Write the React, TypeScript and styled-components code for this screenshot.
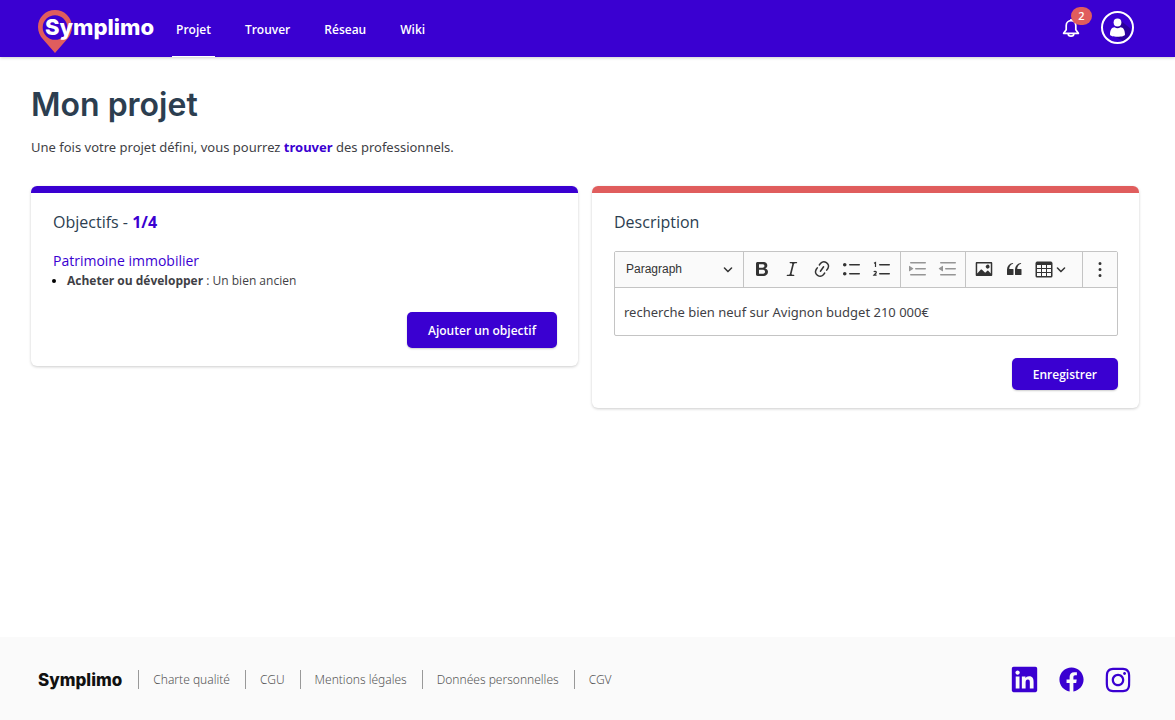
import React from "react";
import styled, { createGlobalStyle } from "styled-components";
import { BiLogoFacebookCircle } from "react-icons/bi";
import { FaInstagram, FaLinkedin } from "react-icons/fa";

const violet = "#3a00d1";
const coral = "#e05d5d";
const slate = "#2c3e50";
const brandFont = `"Inter", "Open Sans", sans-serif`;
const wideFont = `"Noto Sans", "Open Sans", sans-serif`;

const GlobalStyle = createGlobalStyle`
  *, *::before, *::after { box-sizing: border-box; }
  body {
    margin: 0;
    background: #fff;
    color: #3f3f46;
    font-family: "Open Sans", "Noto Sans", sans-serif;
    font-size: 13px;
    line-height: 20px;
  }
  h1, h2, h3, p, ul { margin: 0; padding: 0; }
  a { text-decoration: none; }
  button, select, textarea { font: inherit; color: inherit; }
`;

const Page = styled.div`
  min-height: 100vh;
  display: flex;
  flex-direction: column;
`;

const Header = styled.header`
  display: flex;
  align-items: stretch;
  height: 57px;
  padding: 0 41px 0 38px;
  background: ${violet};
  box-shadow: 0 1px 3px rgba(0, 0, 0, 0.2);
`;

const Logo = styled.a`
  display: grid;
  align-items: start;
  width: 114px;
  margin-right: 20px;
  padding-top: 10px;
  color: #fff;

  > * { grid-area: 1 / 1; }
`;

const LogoText = styled.span`
  padding: 3px 0 0 7px;
  font: 800 22px/28px ${brandFont};
`;

const Nav = styled.nav`
  display: flex;
  gap: 26px;
`;

const NavLink = styled.a<{ $active?: boolean }>`
  padding: 20px 4px 0;
  border-bottom: 1px solid ${(p) => (p.$active ? "#fff" : "transparent")};
  color: #fff;
  font-size: 12px;
  font-weight: 600;
`;

const HeaderActions = styled.div`
  display: flex;
  align-items: center;
  gap: 21px;
  margin-left: auto;
  padding-bottom: 3px;
`;

const IconButton = styled.button`
  position: relative;
  display: flex;
  padding: 0;
  border: 0;
  background: none;
  color: #fff;
  cursor: pointer;
`;

const Badge = styled.span`
  position: absolute;
  top: -10px;
  right: -12px;
  width: 21px;
  height: 18px;
  border-radius: 9px;
  background: ${coral};
  font-size: 11px;
  font-weight: 600;
  line-height: 18px;
  text-align: center;
`;

const Main = styled.main`
  flex: 1;
  padding: 28px 36px 40px 31px;
`;

const Title = styled.h1`
  color: ${slate};
  font: 600 32px/40px ${brandFont};
`;

const Intro = styled.p`
  margin-top: 12px;
  font-family: ${wideFont};
`;

const TextLink = styled.a`
  color: ${violet};
  font-weight: 700;
`;

const Cards = styled.div`
  display: grid;
  grid-template-columns: 1fr 1fr;
  align-items: start;
  gap: 14px;
  margin-top: 29px;
`;

const Card = styled.section<{ $accent: string }>`
  padding: 19px 21px 18px 22px;
  border-top: 7px solid ${(p) => p.$accent};
  border-radius: 6px;
  box-shadow: 0 1px 3px rgba(0, 0, 0, 0.2);
`;

const CardTitle = styled.h2`
  color: ${slate};
  font-size: 16px;
  font-weight: 400;
  line-height: 20px;

  strong { color: ${violet}; }
`;

const Theme = styled.h3`
  margin-top: 19px;
  color: ${violet};
  font-size: 14px;
  font-weight: 500;
  line-height: 20px;
`;

const Goals = styled.ul`
  padding-left: 14px;
  font-size: 12px;
  line-height: 20px;

  li::marker { color: #000; }
`;

const CardFooter = styled.div<{ $top: number }>`
  display: flex;
  justify-content: flex-end;
  margin-top: ${(p) => p.$top}px;
`;

const PrimaryButton = styled.button<{ $compact?: boolean }>`
  height: ${(p) => (p.$compact ? 32 : 36)}px;
  padding: 2px 21px 0;
  border: 0;
  border-radius: 5px;
  background: ${violet};
  box-shadow: 0 1px 2px rgba(0, 0, 0, 0.2);
  color: #fff;
  font-size: 12px;
  font-weight: 600;
  cursor: pointer;
`;

const Editor = styled.div`
  margin-top: 19px;
  border: 1px solid #c4c4c4;
  border-radius: 2px;
`;

const Toolbar = styled.div`
  display: flex;
  height: 36px;
  border-bottom: 1px solid #c4c4c4;
  background: #fafafa;
  color: #333;
`;

const ToolGroup = styled.div<{ $tight?: boolean }>`
  display: flex;
  align-items: center;
  gap: 4px;
  padding: 0 ${(p) => (p.$tight ? 4 : 5)}px 2px;
  border-right: 1px solid #c4c4c4;

  &:last-child {
    flex: 1;
    justify-content: center;
    border-right: 0;
  }
`;

const ToolButton = styled.button`
  display: flex;
  align-items: center;
  justify-content: center;
  min-width: 26px;
  height: 28px;
  padding: 0 3px;
  border: 0;
  background: none;
  cursor: pointer;

  &:disabled { opacity: 0.5; color: #333; }
`;

const SplitToolButton = styled(ToolButton)`
  justify-content: flex-start;
  gap: 2px;
  width: 46px;
`;

const HeadingField = styled.label`
  display: flex;
  align-items: center;
  width: 120px;
  padding-right: 6px;

  select {
    flex: 1;
    min-width: 0;
    padding: 0 0 0 7px;
    border: 0;
    appearance: none;
    background: none;
    font: 12px/20px "Liberation Sans", Arial, sans-serif;
  }
`;

const EditorText = styled.textarea`
  display: block;
  width: 100%;
  height: 47px;
  padding: 14px 9px 0;
  border: 0;
  outline: 0;
  background: none;
  resize: none;
  font: 13px/20px ${wideFont};
`;

const Footer = styled.footer`
  display: flex;
  align-items: center;
  justify-content: space-between;
  min-height: 83px;
  padding: 2px 43px 0 38px;
  background: #fafafa;
`;

const FooterLinks = styled.nav`
  display: flex;
  align-items: center;
  color: #555;
  font-family: ${wideFont};
  font-size: 12px;
  font-weight: 300;
`;

const FooterBrand = styled.span`
  padding-right: 16px;
  color: #111;
  font: 800 17px/20px ${brandFont};
`;

const FooterLink = styled.a`
  padding: 1px 15px 0 14px;
  border-left: 1px solid #999;
  color: inherit;
  line-height: 18px;
`;

const Social = styled.div`
  display: flex;
  align-items: center;
  gap: 18px;

  a { display: flex; color: ${violet}; }
`;

function Pin() {
  return (
    <svg width="34" height="43" viewBox="0 0 34 43" aria-hidden="true">
      <path
        fill={coral}
        fillRule="evenodd"
        d="M17 0C7.500 0 0 7.500 0 17c0 5 2 9 5 12.300L17 43l12-13.700C32 26 34 22 34 17 34 7.500 26.500 0 17 0zm0 5.200a12.300 12.300 0 1 1 0 24.600 12.300 12.300 0 0 1 0-24.600z"
      />
    </svg>
  );
}

function Bell() {
  return (
    <svg width="18" height="20" viewBox="0 0 18 20" fill="none" stroke="#fff" strokeWidth="1.700" strokeLinejoin="round" aria-hidden="true">
      <path d="M4.200 12.800V8.500a4.800 4.800 0 0 1 9.600 0v4.300l2.600 3.500H1.600zM9 3.700V1.900" />
      <path d="M6.200 16.700a2.800 2.400 0 0 0 5.600 0" />
    </svg>
  );
}

function Avatar() {
  return (
    <svg width="33" height="33" viewBox="0 0 33 33" aria-hidden="true">
      <path fill="#2a009c" d="M19 9l11 9a14.500 14.500 0 0 1-8 12l-11-6z" />
      <circle cx="16.500" cy="16.500" r="15.500" fill="none" stroke="#fff" strokeWidth="2" />
      <circle cx="16.500" cy="11.500" r="3.900" fill="#fff" />
      <path fill="#fff" d="M9 23.500c0-4.500 1.800-7.300 4.500-7.300 1 .7 2 1 3 1s2-.3 3-1c2.700 0 4.500 2.800 4.500 7.300 0 1.500-3.300 2.200-7.500 2.200S9 25 9 23.500z" />
    </svg>
  );
}

const icons = {
  bold: "M10.187 17H5.773c-.637 0-1.092-.138-1.364-.415-.273-.277-.409-.718-.409-1.323V4.738c0-.617.14-1.062.419-1.332.279-.27.73-.406 1.354-.406h4.68c.69 0 1.288.041 1.793.124.506.083.96.242 1.36.478.341.197.644.447.906.75a3.262 3.262 0 0 1 .808 2.162c0 1.401-.722 2.426-2.167 3.075C15.05 10.175 16 11.315 16 13.01a3.756 3.756 0 0 1-2.296 3.504 6.1 6.1 0 0 1-1.517.377c-.571.073-1.238.11-2 .11zm-.217-6.217H7v4.087h3.069c1.977 0 2.965-.69 2.965-2.072 0-.707-.256-1.22-.768-1.537-.512-.319-1.277-.478-2.296-.478zM7 5.13v3.619h2.606c.729 0 1.292-.067 1.69-.2a1.6 1.6 0 0 0 .91-.765c.165-.267.247-.566.247-.897 0-.707-.26-1.176-.778-1.409-.519-.232-1.31-.348-2.375-.348H7z",
  italic: "m9.586 14.633.021.004c-.036.335.095.655.393.962.082.083.173.15.274.201h1.474a.6.6 0 1 1 0 1.2H5.304a.6.6 0 0 1 0-1.2h1.15c.474-.07.809-.182 1.005-.334.157-.122.291-.32.404-.597l2.416-9.55a1.053 1.053 0 0 0-.281-.823 1.12 1.12 0 0 0-.442-.296H8.15a.6.6 0 0 1 0-1.2h6.443a.6.6 0 1 1 0 1.2h-1.195c-.376.056-.65.155-.823.296-.215.175-.423.439-.623.79l-2.366 9.347z",
  link: "m11.077 15 .991-1.416a.75.75 0 1 1 1.229.86l-1.148 1.64a.748.748 0 0 1-.217.206 5.251 5.251 0 0 1-8.503-5.955.741.741 0 0 1 .12-.274l1.147-1.639a.75.75 0 1 1 1.228.86L4.933 10.7l.006.003a3.75 3.75 0 0 0 6.132 4.294l.006.004zm5.494-5.335a.748.748 0 0 1-.12.274l-1.147 1.639a.75.75 0 1 1-1.228-.86l.86-1.23a3.75 3.75 0 0 0-6.144-4.301l-.86 1.229a.75.75 0 0 1-1.229-.86l1.148-1.64a.748.748 0 0 1 .217-.206 5.251 5.251 0 0 1 8.503 5.955zm-4.563-2.532a.75.75 0 0 1 .184 1.045l-3.155 4.505a.75.75 0 1 1-1.229-.86l3.155-4.506a.75.75 0 0 1 1.045-.184z",
  bullets: "M7 5.75c0 .414.336.75.75.75h9.500a.75.75 0 1 0 0-1.500h-9.500a.75.75 0 0 0-.75.75zm-6 0C1 4.784 1.777 4 2.750 4c.966 0 1.750.777 1.750 1.750 0 .966-.777 1.750-1.750 1.750C1.784 7.500 1 6.723 1 5.750zm6 9c0 .414.336.75.75.75h9.500a.75.75 0 1 0 0-1.500h-9.500a.75.75 0 0 0-.75.75zm-6 0c0-.966.777-1.750 1.750-1.750.966 0 1.750.777 1.750 1.750 0 .966-.777 1.750-1.750 1.750-.966 0-1.750-.777-1.750-1.750z",
  numberLines: "M7 5.75c0 .414.336.75.75.75h9.500a.75.75 0 1 0 0-1.500h-9.500a.75.75 0 0 0-.75.75zm0 9c0 .414.336.75.75.75h9.500a.75.75 0 1 0 0-1.500h-9.500a.75.75 0 0 0-.75.75z",
  indent: "M2 3.75c0 .414.336.75.75.75h14.500a.75.75 0 1 0 0-1.500H2.750a.75.75 0 0 0-.75.75zm5 6c0 .414.336.75.75.75h9.500a.75.75 0 1 0 0-1.500h-9.500a.75.75 0 0 0-.75.75zM2.750 16.500h14.500a.75.75 0 1 0 0-1.500H2.750a.75.75 0 1 0 0 1.500zM1.632 6.950 5.020 9.358a.4.4 0 0 1-.013.661l-3.390 2.207A.4.4 0 0 1 1 11.892V7.275a.4.4 0 0 1 .632-.326z",
  outdent: "M2 3.75c0 .414.336.75.75.75h14.500a.75.75 0 1 0 0-1.500H2.750a.75.75 0 0 0-.75.75zm5 6c0 .414.336.75.75.75h9.500a.75.75 0 1 0 0-1.500h-9.500a.75.75 0 0 0-.75.75zM2.750 16.500h14.500a.75.75 0 1 0 0-1.500H2.750a.75.75 0 1 0 0 1.500zM4.368 6.950.980 9.358a.4.4 0 0 0 .013.661l3.390 2.207A.4.4 0 0 0 5 11.892V7.275a.4.4 0 0 0-.632-.326z",
  image: "M6.91 10.54c.26-.23.64-.21.88.03l3.36 3.14 2.23-2.06a.64.64 0 0 1 .87 0l2.52 2.97V4.5H3.2v10.12l3.71-4.08zm10.27-7.51c.6 0 1.09.47 1.09 1.05v11.84c0 .59-.49 1.06-1.09 1.06H2.79c-.6 0-1.09-.47-1.09-1.06V4.08c0-.58.49-1.05 1.1-1.05h14.38zm-5.22 5.56a1.96 1.96 0 1 1 3.4-1.96 1.96 1.96 0 0 1-3.4 1.96z",
  quote: "M3 10.423a6.5 6.5 0 0 1 6.056-6.408l.038.67C6.448 5.423 5.354 7.663 5.22 10H9c.552 0 .5.432.5.986v4.511c0 .554-.448.503-1 .503h-5c-.552 0-.5-.449-.5-1.003v-4.574zm8 0a6.5 6.5 0 0 1 6.056-6.408l.038.67c-2.646.739-3.74 2.979-3.873 5.315H17c.552 0 .5.432.5.986v4.511c0 .554-.448.503-1 .503h-5c-.552 0-.5-.449-.5-1.003v-4.574z",
  table: "M3 6v3h4V6H3zm0 4v3h4v-3H3zm0 4v3h4v-3H3zm5 3h4v-3H8v3zm5 0h4v-3h-4v3zm4-4v-3h-4v3h4zm0-4V6h-4v3h4zm1.500 8a1.500 1.500 0 0 1-1.500 1.500H3A1.500 1.500 0 0 1 1.500 17V4c.222-.863 1.068-1.500 2-1.500h13c.932 0 1.778.637 2 1.500v13zM12 13v-3H8v3h4zm0-4V6H8v3h4z",
  more: "M8.500 4.500a1.500 1.500 0 1 1 3 0 1.500 1.500 0 0 1-3 0zm0 6a1.500 1.500 0 1 1 3 0 1.500 1.500 0 0 1-3 0zm0 6a1.500 1.500 0 1 1 3 0 1.500 1.500 0 0 1-3 0z",
};

function ToolIcon({ d, children }: { d: string; children?: React.ReactNode }) {
  return (
    <svg width="20" height="20" viewBox="0 0 20 20" fill="currentColor" aria-hidden="true">
      <path d={d} />
      {children}
    </svg>
  );
}

function Chevron() {
  return (
    <svg width="10" height="10" viewBox="0 0 10 10" fill="currentColor" aria-hidden="true">
      <path d="M.941 4.523a.75.75 0 1 1 1.060-1.060l3.006 3.005 3.005-3.005a.75.75 0 1 1 1.060 1.060l-3.549 3.550a.75.75 0 0 1-1.168-.136L.941 4.523z" />
    </svg>
  );
}

function Tool({ label, d, disabled, children }: { label: string; d: string; disabled?: boolean; children?: React.ReactNode }) {
  return (
    <ToolButton type="button" aria-label={label} disabled={disabled}>
      <ToolIcon d={d}>{children}</ToolIcon>
    </ToolButton>
  );
}

const navItems = ["Projet", "Trouver", "Réseau", "Wiki"];
const footerItems = ["Charte qualité", "CGU", "Mentions légales", "Données personnelles", "CGV"];

export default function App() {
  return (
    <Page>
      <GlobalStyle />
      <Header>
        <Logo href="#">
          <Pin />
          <LogoText>Symplimo</LogoText>
        </Logo>
        <Nav>
          {navItems.map((item, i) => (
            <NavLink key={item} href="#" $active={i === 0}>{item}</NavLink>
          ))}
        </Nav>
        <HeaderActions>
          <IconButton type="button" aria-label="Notifications">
            <Bell />
            <Badge>2</Badge>
          </IconButton>
          <IconButton type="button" aria-label="Mon compte">
            <Avatar />
          </IconButton>
        </HeaderActions>
      </Header>

      <Main>
        <Title>Mon projet</Title>
        <Intro>
          Une fois votre projet défini, vous pourrez <TextLink href="#">trouver</TextLink> des professionnels.
        </Intro>
        <Cards>
          <Card $accent={violet}>
            <CardTitle>Objectifs - <strong>1/4</strong></CardTitle>
            <Theme>Patrimoine immobilier</Theme>
            <Goals>
              <li><strong>Acheter ou développer</strong> : Un bien ancien</li>
            </Goals>
            <CardFooter $top={21}>
              <PrimaryButton type="button">Ajouter un objectif</PrimaryButton>
            </CardFooter>
          </Card>
          <Card $accent={coral}>
            <CardTitle>Description</CardTitle>
            <Editor>
              <Toolbar role="toolbar">
                <ToolGroup $tight>
                  <HeadingField>
                    <select aria-label="Heading" defaultValue="Paragraph">
                      <option>Paragraph</option>
                    </select>
                    <Chevron />
                  </HeadingField>
                </ToolGroup>
                <ToolGroup>
                  <Tool label="Bold" d={icons.bold} />
                  <Tool label="Italic" d={icons.italic} />
                  <Tool label="Link" d={icons.link} />
                  <Tool label="Bulleted List" d={icons.bullets} />
                  <Tool label="Numbered List" d={icons.numberLines}>
                    <path d="M2 4.200 3.500 3.400V8M1.800 12.900c.5-.8 2.700-.7 2.500.5-.1.900-1.500 1.600-2.400 2.700h2.700" fill="none" stroke="currentColor" strokeWidth="1.200" />
                  </Tool>
                </ToolGroup>
                <ToolGroup $tight>
                  <Tool label="Increase indent" d={icons.indent} disabled />
                  <Tool label="Decrease indent" d={icons.outdent} disabled />
                </ToolGroup>
                <ToolGroup>
                  <Tool label="Insert image" d={icons.image} />
                  <Tool label="Block quote" d={icons.quote} />
                  <SplitToolButton type="button" aria-label="Insert table">
                    <ToolIcon d={icons.table} />
                    <Chevron />
                  </SplitToolButton>
                </ToolGroup>
                <ToolGroup $tight>
                  <Tool label="Show more items" d={icons.more} />
                </ToolGroup>
              </Toolbar>
              <EditorText aria-label="Description" defaultValue="recherche bien neuf sur Avignon budget 210 000€" />
            </Editor>
            <CardFooter $top={22}>
              <PrimaryButton type="button" $compact>Enregistrer</PrimaryButton>
            </CardFooter>
          </Card>
        </Cards>
      </Main>

      <Footer>
        <FooterLinks>
          <FooterBrand>Symplimo</FooterBrand>
          {footerItems.map((item) => (
            <FooterLink key={item} href="#">{item}</FooterLink>
          ))}
        </FooterLinks>
        <Social>
          <a href="#" aria-label="LinkedIn"><FaLinkedin size={29} /></a>
          <a href="#" aria-label="Facebook"><BiLogoFacebookCircle size={29} /></a>
          <a href="#" aria-label="Instagram"><FaInstagram size={28} /></a>
        </Social>
      </Footer>
    </Page>
  );
}
